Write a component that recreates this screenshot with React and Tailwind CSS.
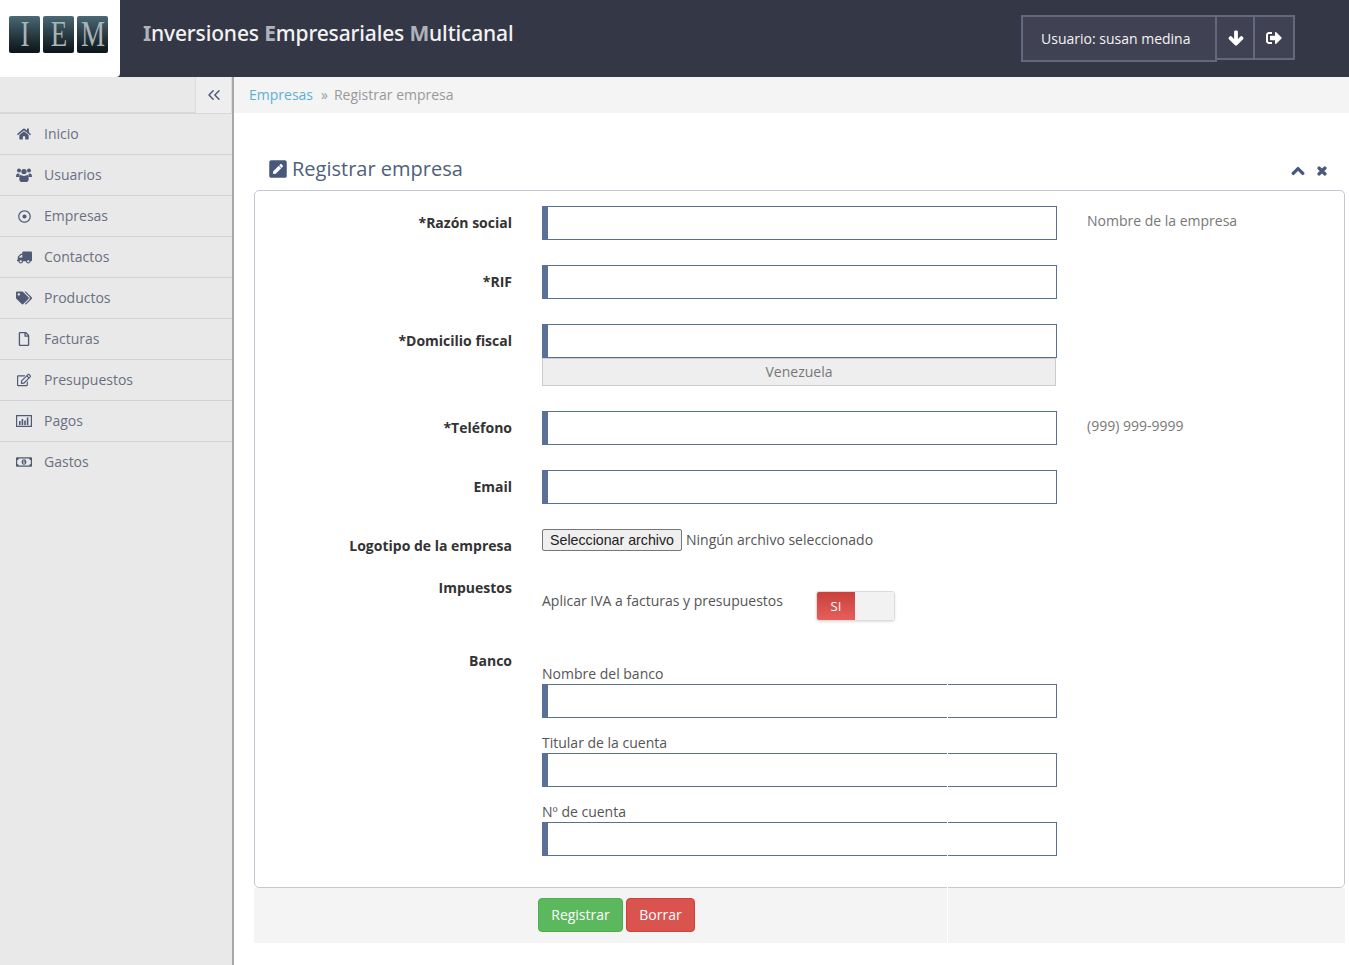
import { FaHome, FaRegDotCircle, FaTruck, FaTags, FaRegFile, FaRegEdit, FaRegMoneyBillAlt, FaArrowDown, FaSignOutAlt, FaChevronUp, FaTimes, FaPenSquare } from "react-icons/fa"
import { ChevronsLeft } from "lucide-react"

const BoxedChart = () => (
  <svg width="16" height="14" viewBox="0 0 16 14" fill="currentColor">
    <path d="M0 1h16v12H0V1Zm1.2 1.2v9.6h13.6V2.2H1.2Z" fillRule="evenodd" />
    <rect x="3" y="7" width="1.6" height="4" />
    <rect x="5.6" y="5" width="1.6" height="6" />
    <rect x="8.2" y="6.5" width="1.6" height="4.5" />
    <rect x="10.8" y="3.5" width="1.6" height="7.5" />
  </svg>
)

const UsersIcon = () => (
  <svg width="16" height="14" viewBox="0 0 16 14" fill="currentColor">
    <circle cx="3" cy="2.6" r="2" />
    <circle cx="13" cy="2.6" r="2" />
    <circle cx="8" cy="3.6" r="2.7" />
    <path d="M0 9.2C0 6.6.8 5.5 2 5.5c.6 0 1 .3 1.6.4-.3 1.1-.2 2.3.3 3.1H.8c-.5 0-.8 0-.8.2ZM16 9.2c0-2.6-.8-3.7-2-3.7-.6 0-1 .3-1.6.4.3 1.1.2 2.3-.3 3.1h3.1c.5 0 .8 0 .8.2Z" />
    <path d="M4.6 6.8c.8.7 2 1.2 3.4 1.2s2.6-.5 3.4-1.2c.8.3 1.3 1.6 1.3 4.3 0 1.8-1 2.9-2.2 2.9H5.500C4.300 14 3.300 12.900 3.300 11.100c0-2.700.5-4 1.300-4.300Z" />
  </svg>
)

const menu = [
  { label: "Inicio", icon: <FaHome size={14} /> },
  { label: "Usuarios", icon: <UsersIcon /> },
  { label: "Empresas", icon: <FaRegDotCircle size={13} /> },
  { label: "Contactos", icon: <FaTruck size={15} className="-scale-x-100" /> },
  { label: "Productos", icon: <FaTags size={16} /> },
  { label: "Facturas", icon: <FaRegFile size={14} /> },
  { label: "Presupuestos", icon: <FaRegEdit size={14} /> },
  { label: "Pagos", icon: <BoxedChart /> },
  { label: "Gastos", icon: <FaRegMoneyBillAlt size={16} /> },
]

const Input = () => (
  <input className="block w-[515px] h-[34px] bg-white border border-[#5a7090] border-l-[6px] border-l-[#5a7099] outline-none" />
)

const Label = ({ children, className = "" }) => (
  <label className={`block w-[257px] shrink-0 text-right font-bold text-[#333] ${className}`}>{children}</label>
)

const Row = ({ label, hint, children, className = "mb-[25px]" }) => (
  <div className={`flex ${className}`}>
    <Label className="pt-[7px]">{label}</Label>
    <div className="ml-[30px] w-[515px]">{children}</div>
    {hint && <div className="ml-[30px] pt-[5px] text-[#777]">{hint}</div>}
  </div>
)

const BankField = ({ label }) => (
  <div className="mb-[15px] last:mb-0">
    <div className="h-[20px] leading-[20px] text-[#555]">{label}</div>
    <Input />
  </div>
)

export default function App() {
  return (
    <div className="min-h-[965px] bg-white font-['Open_Sans',sans-serif] text-[14px] leading-[20px]">
      {/* Header */}
      <header className="flex items-start h-[77px] bg-[#343746]">
        <div className="flex items-center justify-center gap-[3px] w-[120px] h-[77px] bg-white rounded-br-sm pb-[9px] pr-[3px]">
          {["I", "E", "M"].map((l) => (
            <span key={l} className="flex items-center justify-center w-[31px] h-[37px] rounded-[2px] bg-gradient-to-b from-[#4a6a75] to-[#0c1418] text-[#aab4b8] text-[36px] font-['Liberation_Serif',serif]">
              <span className="inline-block scale-x-75">{l}</span>
            </span>
          ))}
        </div>
        <h1 className="ml-[23px] mt-[19px] text-[21px] tracking-[-0.15px] leading-[28px] font-medium text-[#f2f2f2] font-['Noto_Sans',sans-serif]">
          <span className="text-[#b0b2bb] font-bold">I</span>nversiones <span className="text-[#b0b2bb] font-bold">E</span>mpresariales <span className="text-[#b0b2bb] font-bold">M</span>ulticanal
        </h1>
        <div className="flex items-start ml-auto mr-[54px] mt-[15px] text-white">
          <div className="flex items-center w-[196px] h-[47px] pl-[18px] bg-[#404253] border-2 border-[#65687a] font-medium text-[#f4f4f4]">Usuario: susan medina</div>
          <div className="flex items-center justify-center w-[38px] h-[45px] bg-[#404253] border-y-2 border-r-2 border-[#65687a] pl-[2px]"><FaArrowDown size={16} stroke="currentColor" strokeWidth={40} /></div>
          <div className="flex items-center justify-center w-[40px] h-[45px] bg-[#404253] border-y-2 border-r-2 border-[#65687a]"><FaSignOutAlt size={16} /></div>
        </div>
      </header>

      <div className="flex">
        {/* Sidebar */}
        <aside className="w-[234px] min-h-[888px] shrink-0 bg-[#e9e9e9] border-r-2 border-[#a8a8a8]">
          <div className="flex justify-end h-[37px] border-b-2 border-[#d8d8d8]">
            <button className="flex items-center justify-center w-[37px] h-[36px] bg-[#eeeeee] border-x border-[#dcdcdc] text-[#505a75]">
              <ChevronsLeft size={20} strokeWidth={1.8} />
            </button>
          </div>
          <nav>
            {menu.map((item) => (
              <a key={item.label} className="flex items-center h-[41px] border-b border-[#d3d3d3] last:border-b-transparent text-[#6a7083]">
                <span className="flex items-center justify-center w-[16px] ml-[16px] mr-[12px] text-[#505a75]">{item.icon}</span>
                {item.label}
              </a>
            ))}
          </nav>
        </aside>

        {/* Content */}
        <main className="relative flex-1">
          <div className="h-[36px] pl-[15px] flex items-center bg-[#f4f4f4] text-[#999]">
            <a className="text-[#5bb0d2]">Empresas</a>
            <span className="ml-[8px] mr-[6px]">»</span>
            Registrar empresa
          </div>

          <div className="pl-[20px] pr-[4px] pt-[40px]">
            <div className="flex items-center h-[37px] pl-[14px] pr-[17px] pb-[6px] text-[#4f5f7b]">
              <FaPenSquare size={20} className="text-[#47597a] mr-[4px]" />
              <span className="text-[20px]">Registrar empresa</span>
              <span className="ml-auto flex items-center gap-[11px] pt-[5px] text-[#47597a]">
                <FaChevronUp size={14} stroke="currentColor" strokeWidth={40} />
                <FaTimes size={12} stroke="currentColor" strokeWidth={50} />
              </span>
            </div>

            <div className="border border-[#c3c8d2] rounded-[5px] pt-[15px] h-[698px]">
              <Row label="*Razón social" hint="Nombre de la empresa"><Input /></Row>
              <Row label="*RIF"><Input /></Row>
              <Row label="*Domicilio fiscal">
                <Input />
                <div className="w-[514px] h-[28px] flex items-center justify-center bg-[#eeeeee] border border-[#cccccc] text-[#777]">Venezuela</div>
              </Row>
              <Row label="*Teléfono" hint="(999) 999-9999"><Input /></Row>
              <Row label="Email"><Input /></Row>

              <div className="flex h-[47px]">
                <Label className="pt-[7px]">Logotipo de la empresa</Label>
                <div className="ml-[30px] flex items-start text-[#555]">
                  <button className="h-[22px] w-[140px] bg-[#efefef] border border-[#767676] rounded-[2px] text-[14.2px] leading-[18px] text-[#222] font-['Liberation_Sans',sans-serif]">Seleccionar archivo</button>
                  <span className="ml-[4px] leading-[22px]">Ningún archivo seleccionado</span>
                </div>
              </div>

              <div className="flex h-[73px]">
                <Label className="pt-[2px]">Impuestos</Label>
                <div className="ml-[30px] flex items-start text-[#555]">
                  <span className="pt-[15px] w-[274px]">Aplicar IVA a facturas y presupuestos</span>
                  <div className="flex mt-[15px] w-[79px] h-[30px] rounded-[3px] border border-[#dcdcdc] overflow-hidden shadow-sm">
                    <span className="flex items-center justify-center w-[38px] bg-gradient-to-b from-[#c9403c] to-[#e65f5b] text-white text-[13px]">SI</span>
                    <span className="flex-1 bg-[#f2f2f2]"></span>
                  </div>
                </div>
              </div>

              <div className="flex">
                <Label className="pt-[2px]">Banco</Label>
                <div className="ml-[30px] pt-[15px]">
                  <BankField label="Nombre del banco" />
                  <BankField label="Titular de la cuenta" />
                  <BankField label="Nº de cuenta" />
                </div>
              </div>
            </div>

            <div className="flex items-start h-[55px] pl-[284px] pt-[10px] gap-[3px] bg-[#f4f4f4]">
              <button className="h-[34px] w-[85px] rounded-[4px] bg-[#5cb85c] border border-[#4cae4c] text-white">Registrar</button>
              <button className="h-[34px] w-[69px] rounded-[4px] bg-[#d9534f] border border-[#d43f3a] text-white">Borrar</button>
            </div>
          </div>

          {/* white seam over the lower inputs and footer */}
          <div className="absolute left-[713px] top-[607px] w-px h-[259px] bg-white"></div>
        </main>
      </div>
    </div>
  )
}
